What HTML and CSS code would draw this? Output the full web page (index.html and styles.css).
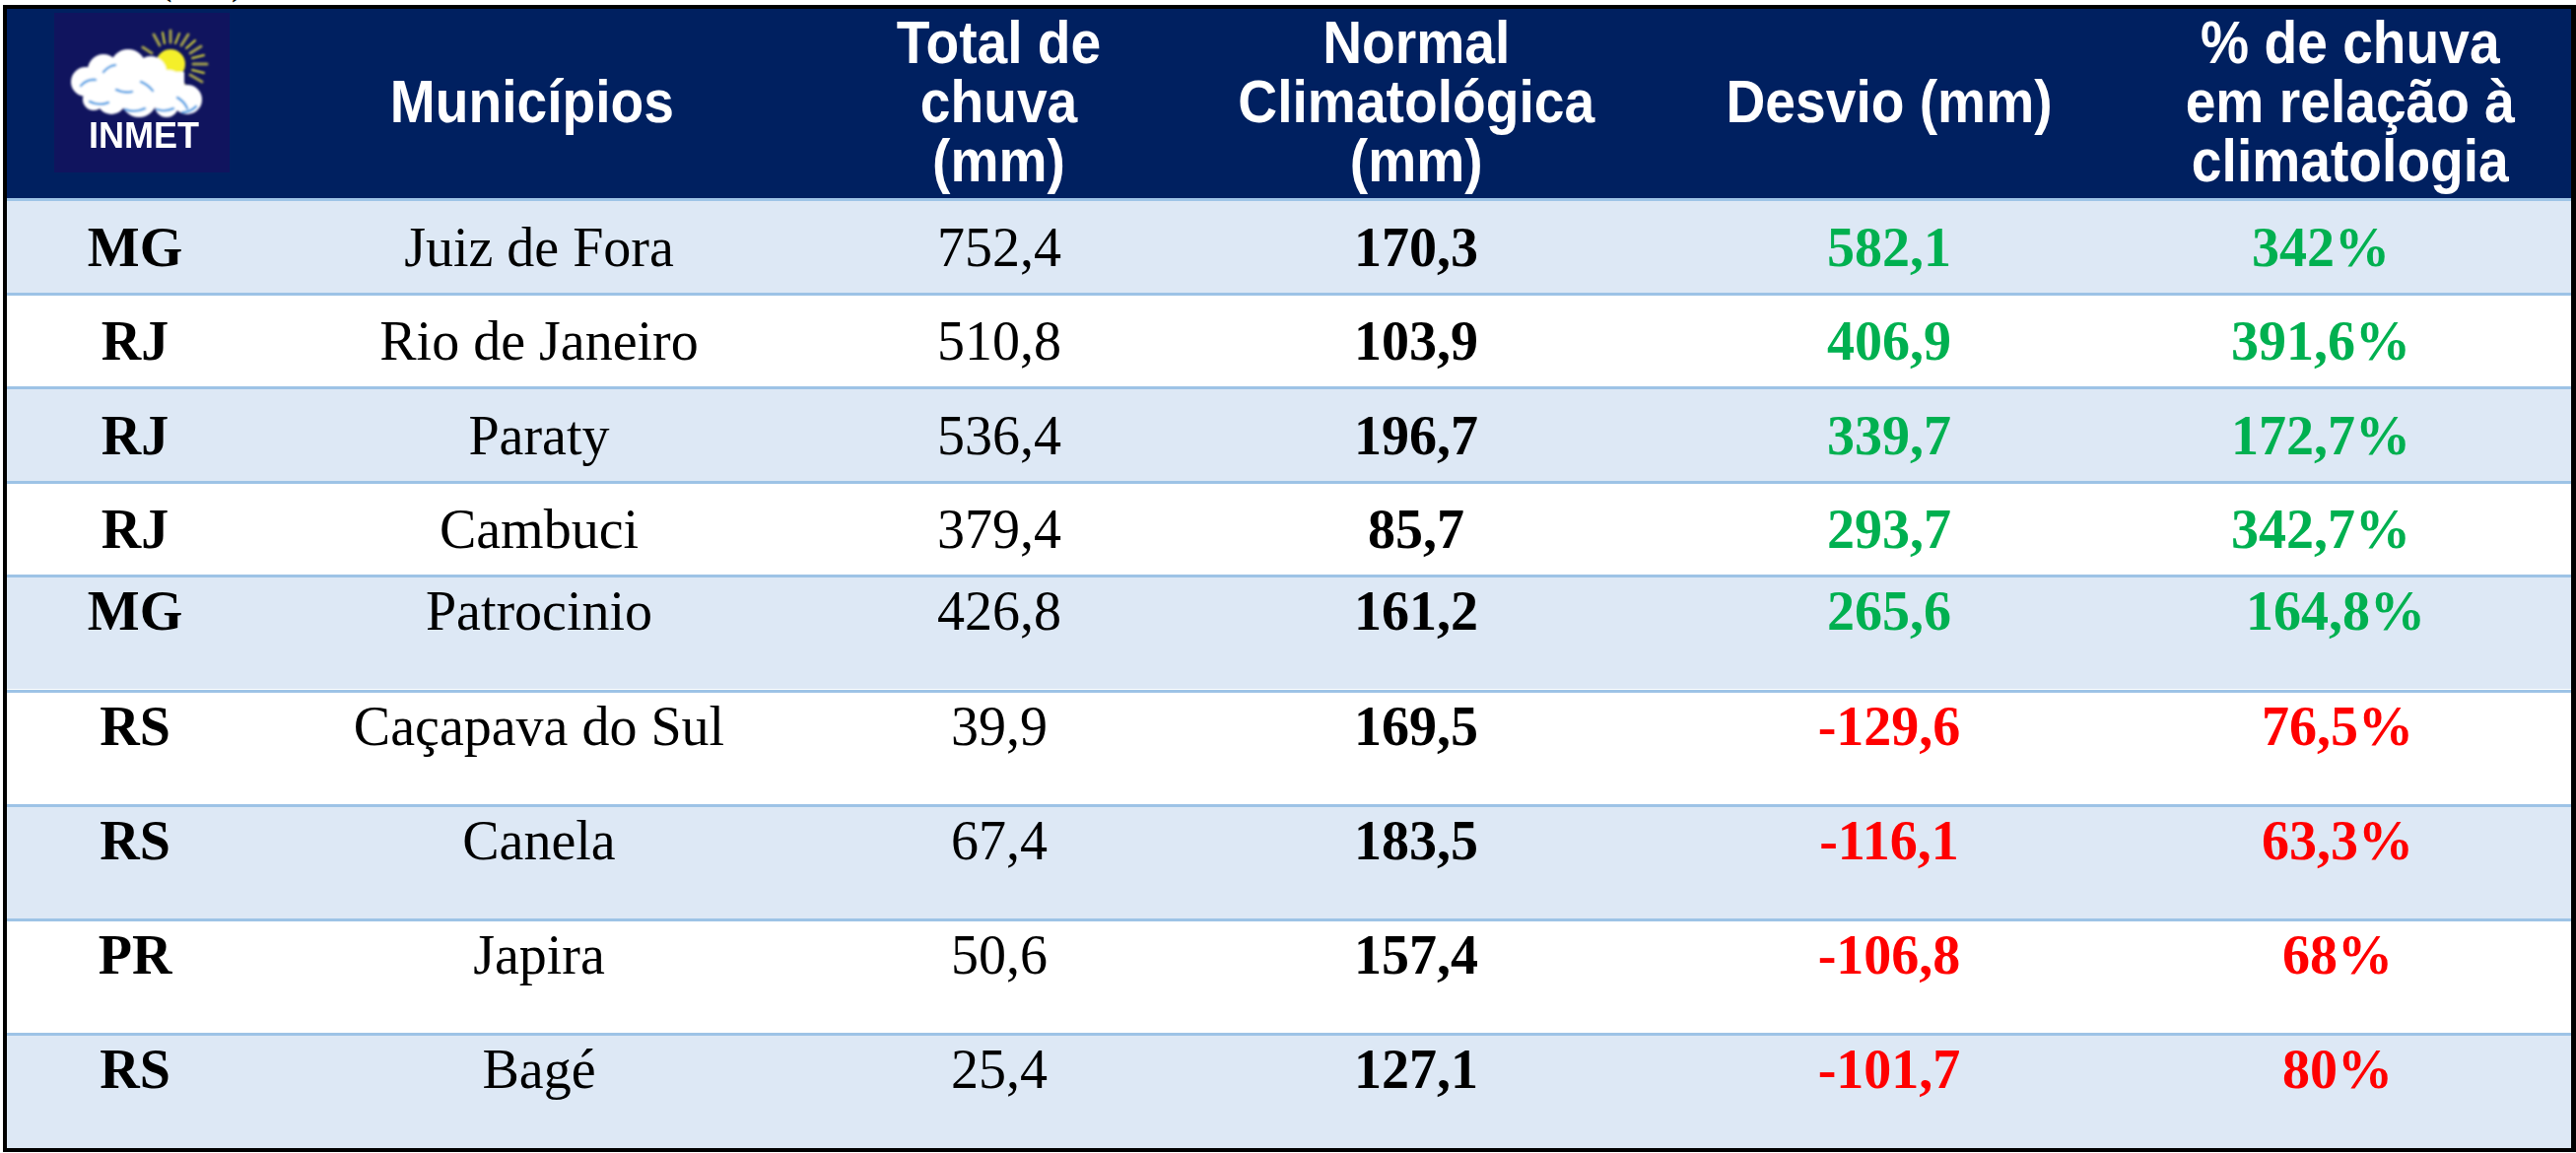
FILE: index.html
```html
<!DOCTYPE html>
<html lang="pt-BR">
<head>
<meta charset="utf-8">
<title>Chuva acumulada - INMET</title>
<link rel="stylesheet" href="styles.css">
</head>
<body>
<div class="cut"><span>(</span><span>)</span></div>
<div class="sheet">
  <div class="row head">
    <div class="cell logo-cell">
      <svg class="logo" viewBox="0 0 178 162" width="178" height="162">
        <defs>
          <filter id="soft" x="-10%" y="-10%" width="120%" height="120%"><feGaussianBlur stdDeviation="1.1"/></filter>
          <filter id="soft2" x="-10%" y="-10%" width="120%" height="120%"><feGaussianBlur stdDeviation="0.7"/></filter>
        </defs>
        <rect width="178" height="162" fill="#10145e"/>
        <g filter="url(#soft)">
          <g stroke="#a3a14e" stroke-width="3" stroke-linecap="round">
            <line x1="118" y1="30" x2="118" y2="18"/>
            <line x1="129" y1="33" x2="136" y2="22"/>
            <line x1="138" y1="41" x2="149" y2="34"/>
            <line x1="141" y1="52" x2="155" y2="52"/>
            <line x1="138" y1="63" x2="150" y2="70"/>
            <line x1="131" y1="72" x2="140" y2="82"/>
            <line x1="107" y1="33" x2="101" y2="22"/>
            <line x1="99" y1="41" x2="90" y2="35"/>
          </g>
          <g stroke="#d9d83a" stroke-width="2" stroke-linecap="round">
            <line x1="123" y1="31" x2="127" y2="21"/>
            <line x1="134" y1="36" x2="143" y2="28"/>
            <line x1="140" y1="46" x2="152" y2="43"/>
            <line x1="140" y1="58" x2="152" y2="61"/>
            <line x1="112" y1="31" x2="110" y2="20"/>
          </g>
          <circle cx="118" cy="52" r="15" fill="#f4ef2c"/>
          <g fill="#ffffff">
            <circle cx="32" cy="70" r="15"/>
            <circle cx="50" cy="58" r="16"/>
            <circle cx="75" cy="55" r="18"/>
            <circle cx="98" cy="60" r="16"/>
            <circle cx="116" cy="74" r="16"/>
            <circle cx="135" cy="88" r="15"/>
            <circle cx="40" cy="88" r="11"/>
            <circle cx="58" cy="88" r="15"/>
            <circle cx="86" cy="88" r="18"/>
            <circle cx="114" cy="94" r="12"/>
            <rect x="32" y="60" width="100" height="34"/>
          </g>
          <g fill="none" stroke="#5aa6e6" stroke-width="2.6" stroke-linecap="round">
            <path d="M27 74 q6 -7 15 -6"/>
            <path d="M50 60 q5 -6 12 -7"/>
            <path d="M36 90 q9 5 19 1"/>
            <path d="M63 78 q8 4 16 2"/>
            <path d="M88 70 q7 3 12 9"/>
            <path d="M72 98 q10 4 20 -1"/>
            <path d="M104 98 q9 3 17 -1"/>
            <path d="M125 86 q7 4 10 11"/>
            <path d="M130 101 q8 0 14 -6"/>
          </g>
        </g>
        <text x="91" y="137" text-anchor="middle" textLength="112" lengthAdjust="spacingAndGlyphs" class="logo-text" filter="url(#soft2)">INMET</text>
      </svg>
    </div>
    <div class="cell c-mun-h"><span class="hx">Municípios</span></div>
    <div class="cell"><span class="hx">Total de<br>chuva<br>(mm)</span></div>
    <div class="cell"><span class="hx">Normal<br>Climatológica<br>(mm)</span></div>
    <div class="cell"><span class="hx">Desvio (mm)</span></div>
    <div class="cell"><span class="hx">% de chuva<br>em relação à<br>climatologia</span></div>
  </div>

  <div class="row light h96">
    <div class="cell b">MG</div><div class="cell">Juiz de Fora</div><div class="cell">752,4</div><div class="cell b">170,3</div><div class="cell b up">582,1</div><div class="cell b up p1">342%</div>
  </div>
  <div class="row white h95">
    <div class="cell b">RJ</div><div class="cell">Rio de Janeiro</div><div class="cell">510,8</div><div class="cell b">103,9</div><div class="cell b up">406,9</div><div class="cell b up p1">391,6%</div>
  </div>
  <div class="row light h96">
    <div class="cell b">RJ</div><div class="cell">Paraty</div><div class="cell">536,4</div><div class="cell b">196,7</div><div class="cell b up">339,7</div><div class="cell b up p1">172,7%</div>
  </div>
  <div class="row white h95">
    <div class="cell b">RJ</div><div class="cell">Cambuci</div><div class="cell">379,4</div><div class="cell b">85,7</div><div class="cell b up">293,7</div><div class="cell b up p1">342,7%</div>
  </div>
  <div class="row light tall h117 edge">
    <div class="cell b">MG</div><div class="cell">Patrocinio</div><div class="cell">426,8</div><div class="cell b">161,2</div><div class="cell b up">265,6</div><div class="cell b up p2">164,8%</div>
  </div>
  <div class="row white tall h116">
    <div class="cell b">RS</div><div class="cell">Caçapava do Sul</div><div class="cell">39,9</div><div class="cell b">169,5</div><div class="cell b down">-129,6</div><div class="cell b down p3">76,5%</div>
  </div>
  <div class="row light tall h116">
    <div class="cell b">RS</div><div class="cell">Canela</div><div class="cell">67,4</div><div class="cell b">183,5</div><div class="cell b down">-116,1</div><div class="cell b down p3">63,3%</div>
  </div>
  <div class="row white tall h116">
    <div class="cell b">PR</div><div class="cell">Japira</div><div class="cell">50,6</div><div class="cell b">157,4</div><div class="cell b down">-106,8</div><div class="cell b down p3">68%</div>
  </div>
  <div class="row light tall h117">
    <div class="cell b">RS</div><div class="cell">Bagé</div><div class="cell">25,4</div><div class="cell b">127,1</div><div class="cell b down">-101,7</div><div class="cell b down p3">80%</div>
  </div>
</div>
</body>
</html>
```

FILE: styles.css
```css
html, body {
  margin: 0;
  padding: 0;
  background: #ffffff;
}

body {
  position: relative;
  width: 2614px;
  height: 1170px;
  overflow: hidden;
  font-family: "Liberation Serif", "Times New Roman", serif;
}

.cut {
  position: absolute;
  left: 160px;
  top: -46px;
  display: flex;
  gap: 60px;
  font-family: "Liberation Serif", serif;
  font-size: 44px;
  line-height: 50px;
  color: #000;
}

.sheet {
  margin: 5px 0 0 3px;
  width: 2611px;
  height: 1164px;
  box-sizing: border-box;
  border: 4px solid #000;
  border-right-width: 5px;
  display: flex;
  flex-direction: column;
}

.row {
  display: grid;
  grid-template-columns: 260px 560px 374px 472px 488px 1fr;
  align-items: center;
  box-sizing: border-box;
}

.cell {
  text-align: center;
  font-size: 56px;
  line-height: 64px;
  color: #000;
  white-space: nowrap;
}

.head {
  height: 192px;
  background: #002060;
}

.head .cell {
  color: #ffffff;
}

.hx {
  display: inline-block;
  font-family: "Liberation Sans", Arial, sans-serif;
  font-weight: bold;
  font-size: 62px;
  line-height: 60px;
  transform: scaleX(0.89);
  transform-origin: center;
}

.c-mun-h {
  padding-right: 14px;
}

.logo-cell {
  align-self: start;
  text-align: left;
  padding: 4px 0 0 48px;
  line-height: 0;
}

.logo {
  display: block;
}

.logo-text {
  font-family: "Liberation Sans", Arial, sans-serif;
  font-weight: bold;
  font-size: 36px;
  fill: #ffffff;
}

.light {
  background: #dde8f5;
  border-top: 3px solid #9dc3e6;
}

.white {
  background: #ffffff;
  border-top: 3px solid #9dc3e6;
}

.edge {
  border-bottom: 1px solid #ffffff;
}

.h96 { height: 96px; }
.h95 { height: 95px; }
.h117 { height: 117px; }
.h116 { height: 116px; }

.tall {
  align-items: start;
}

.tall .cell {
  padding-top: 2px;
}

.b {
  font-weight: bold;
}

.up {
  color: #00b050;
}

.down {
  color: #ff0000;
}

.p1 { padding-right: 60px; }
.p2 { padding-right: 30px; }
.p3 { padding-right: 26px; }
```
